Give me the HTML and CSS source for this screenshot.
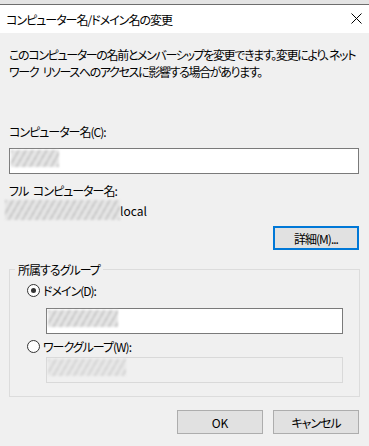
FILE: index.html
```html
<!DOCTYPE html>
<html>
<head>
    <title>コンピューター名/ドメイン名の変更</title>
    <link rel="stylesheet" href="styles.css">
</head>
<body>
    <div class="window">
        <div class="titlebar">
            <span class="title">コンピューター名/ドメイン名の変更</span>
            <svg class="close" width="11" height="11" viewBox="0 0 11 11">
                <path d="M0.5 0.5 L10.5 10.5 M10.5 0.5 L0.5 10.5" stroke="#000" stroke-width="1" fill="none"/>
            </svg>
        </div>

        <div class="content">
            <p class="desc">このコンピューターの名前とメンバーシップを変更できます。変更により、ネット<br>ワーク リソースへのアクセスに影響する場合があります。</p>

            <div class="label name-label">コンピューター名(C):</div>
            <div class="textbox"><span class="blur blur-name"></span></div>

            <div class="label full-label">フル コンピューター名:</div>
            <div class="full-name"><span class="blur blur-full"></span><span class="latin">local</span></div>

            <div class="row-right">
                <button class="btn focused">詳細(M)...</button>
            </div>

            <fieldset class="group">
                <legend>所属するグループ</legend>
                <div class="radio-row first"><span class="radio checked"></span>ドメイン(D):</div>
                <div class="textbox sub"><span class="blur blur-domain"></span></div>
                <div class="radio-row second"><span class="radio"></span>ワークグループ(W):</div>
                <div class="textbox sub disabled"><span class="blur blur-work"></span></div>
            </fieldset>

            <div class="actions">
                <button class="btn latin">OK</button>
                <button class="btn">キャンセル</button>
            </div>
        </div>
    </div>
</body>
</html>
```

FILE: styles.css
```css
html, body { margin: 0; padding: 0; }
body { width: 369px; height: 446px; overflow: hidden; background: #f0f0f0; color: #000;
       font-family: "Noto Sans CJK JP", "Noto Sans", sans-serif; font-size: 12px; line-height: 17px;
       font-feature-settings: "palt"; letter-spacing: -1px; word-spacing: 3px; }
.latin { letter-spacing: 0; }
.window { width: 369px; height: 446px; }

.titlebar { height: 29px; background: #fff; border-top: 4px solid #e4e4e4; box-shadow: inset 0 1px 0 #6e6e6e;
            display: flex; align-items: center; justify-content: space-between; padding: 0 7px 0 6px; }
.title { font-size: 12px; margin-top: 1px; }

.content { padding: 13px 10px 0 9px; }
.desc { margin: 0; white-space: nowrap; letter-spacing: -1.35px; }

.label { white-space: nowrap; }
.name-label { margin-top: 43px; }
.full-label { margin-top: 8px; }

.textbox { height: 24px; border: 1px solid #7a7a7a; background: #fff; margin-top: 8px; }
.textbox.sub { width: 295px; margin-left: 19px; }
.textbox.disabled { background: #f0f0f0; border-color: #d9d9d9; margin-top: 2px; }

.blur { display: inline-block; height: 17px; margin: 1px 0 0 1px; filter: blur(0.8px);
        background: repeating-linear-gradient(120deg, #c8c8c8 0 2px, #e6e6e6 2px 6px); }
.blur-name { width: 48px; }
.blur-domain { width: 70px; }
.blur-work { width: 78px; background: repeating-linear-gradient(120deg, #d4d4d4 0 2px, #e8e8e8 2px 6px); }
.blur-full { width: 115px; height: 20px; margin: 0 0 0 -4px; }

.full-name { margin-top: 1px; height: 20px; display: flex; align-items: center; }

.row-right { display: flex; justify-content: flex-end; margin-top: 6px; }
.btn { width: 86px; height: 24px; padding: 0; background: #e1e1e1; border: 1px solid #adadad;
       font-family: inherit; font-size: 12px; color: #000; font-feature-settings: "palt"; letter-spacing: -1px; }
.btn.latin { letter-spacing: 0; }
.btn.focused { border: 2px solid #0078d7; }

.group { margin: 11px 0 0 0; padding: 0 16px 13px 17px; border: 1px solid #dcdcdc; }
.group legend { padding: 0 3px; margin-left: -12px; line-height: 17px; }

.radio-row { display: flex; align-items: center; height: 17px; }
.radio-row.first { margin-top: 4px; }
.radio-row.second { margin-top: 4px; }
.radio { width: 11px; height: 11px; border: 1px solid #333; border-radius: 50%; background: #fff;
         margin-right: 3px; position: relative; }
.radio.checked::after { content: ""; position: absolute; left: 3px; top: 3px; width: 5px; height: 5px;
                        border-radius: 50%; background: #333; }
.first + .textbox { margin-top: 9px; }

.actions { display: flex; justify-content: flex-end; gap: 10px; margin-top: 13px; }
```
